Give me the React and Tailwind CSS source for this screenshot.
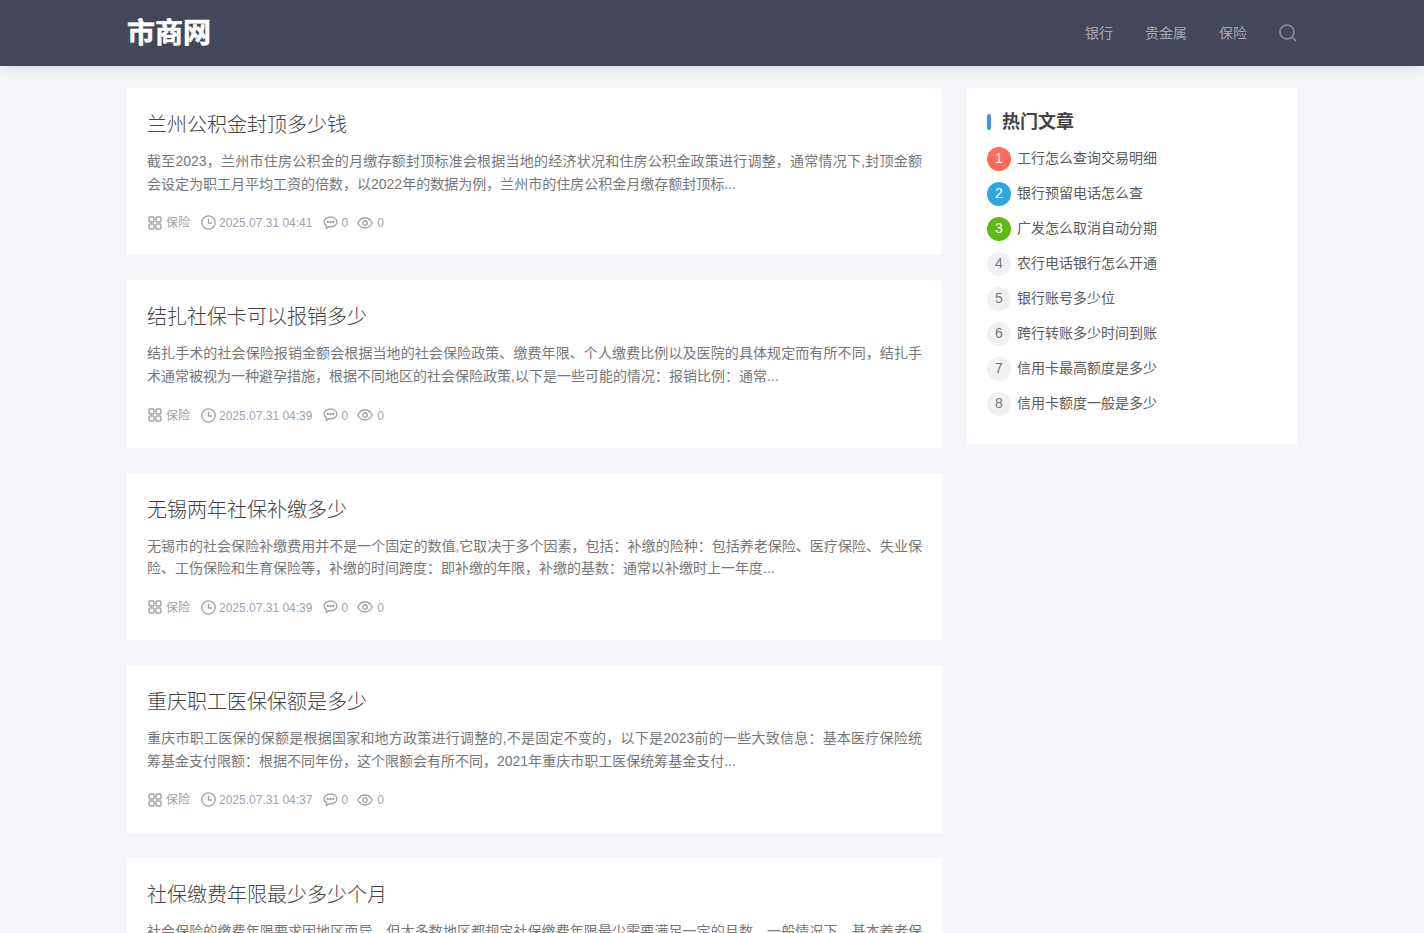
import React from "react";

const FONT = "font-['Liberation_Sans','Noto_Sans_CJK_SC',sans-serif]";

const posts = [
  { title: "兰州公积金封顶多少钱", time: "2025.07.31 04:41", text: "截至2023，兰州市住房公积金的月缴存额封顶标准会根据当地的经济状况和住房公积金政策进行调整，通常情况下,封顶金额会设定为职工月平均工资的倍数，以2022年的数据为例，兰州市的住房公积金月缴存额封顶标..." },
  { title: "结扎社保卡可以报销多少", time: "2025.07.31 04:39", text: "结扎手术的社会保险报销金额会根据当地的社会保险政策、缴费年限、个人缴费比例以及医院的具体规定而有所不同，结扎手术通常被视为一种避孕措施，根据不同地区的社会保险政策,以下是一些可能的情况：报销比例：通常..." },
  { title: "无锡两年社保补缴多少", time: "2025.07.31 04:39", text: "无锡市的社会保险补缴费用并不是一个固定的数值,它取决于多个因素，包括：补缴的险种：包括养老保险、医疗保险、失业保险、工伤保险和生育保险等，补缴的时间跨度：即补缴的年限，补缴的基数：通常以补缴时上一年度..." },
  { title: "重庆职工医保保额是多少", time: "2025.07.31 04:37", text: "重庆市职工医保的保额是根据国家和地方政策进行调整的,不是固定不变的，以下是2023前的一些大致信息：基本医疗保险统筹基金支付限额：根据不同年份，这个限额会有所不同，2021年重庆市职工医保统筹基金支付..." },
  { title: "社保缴费年限最少多少个月", time: "2025.07.31 04:35", text: "社会保险的缴费年限要求因地区而异，但大多数地区都规定社保缴费年限最少需要满足一定的月数，一般情况下，基本养老保险的累计缴费年限需要满足十五年，也就是一百八十个月..." },
];

const hot = [
  ["工行怎么查询交易明细", "bg-[#ff6b5a] text-white"],
  ["银行预留电话怎么查", "bg-[#2ea7e0] text-white"],
  ["广发怎么取消自动分期", "bg-[#5fba13] text-white"],
  ["农行电话银行怎么开通", "bg-[#f0f1f2] text-[#777]"],
  ["银行账号多少位", "bg-[#f0f1f2] text-[#777]"],
  ["跨行转账多少时间到账", "bg-[#f0f1f2] text-[#777]"],
  ["信用卡最高额度是多少", "bg-[#f0f1f2] text-[#777]"],
  ["信用卡额度一般是多少", "bg-[#f0f1f2] text-[#777]"],
];

function GridIcon() {
  return (
    <svg width="14" height="14" viewBox="0 0 14 14" fill="none" stroke="#a0a2ad" strokeWidth="1.4" className="shrink-0">
      <rect x="1" y="1" width="5" height="5" rx="1" />
      <rect x="8" y="1" width="5" height="5" rx="1" />
      <rect x="1" y="8" width="5" height="5" rx="1" />
      <rect x="8" y="8" width="5" height="5" rx="1" />
    </svg>
  );
}
function ClockIcon() {
  return (
    <svg width="15" height="15" viewBox="0 0 15 15" fill="none" stroke="#a0a2ad" strokeWidth="1.3" className="shrink-0">
      <circle cx="7.5" cy="7.5" r="6.7" />
      <path d="M7.5 3.6V8h3.4" />
    </svg>
  );
}
function ChatIcon() {
  return (
    <svg width="15" height="14" viewBox="0 0 15 14" fill="none" stroke="#a0a2ad" strokeWidth="1.3" className="shrink-0">
      <path d="M7.500 1C3.900 1 1 3.100 1 5.900c0 1.700 1.100 3.100 2.700 4L3.400 12.600l3-1.900c.4 0 .7.100 1.100.100 3.600 0 6.500-2.200 6.500-4.900S11.100 1 7.500 1z" />
      <circle cx="4.700" cy="6" r=".6" fill="#a0a2ad" />
      <circle cx="7.500" cy="6" r=".6" fill="#a0a2ad" />
      <circle cx="10.300" cy="6" r=".6" fill="#a0a2ad" />
    </svg>
  );
}
function EyeIcon() {
  return (
    <svg width="16" height="12" viewBox="0 0 16 12" fill="none" stroke="#a0a2ad" strokeWidth="1.3" className="shrink-0">
      <path d="M.8 6C2.400 2.800 5 1 8 1s5.600 1.800 7.200 5C13.600 9.200 11 11 8 11S2.400 9.200.8 6z" />
      <circle cx="8" cy="6" r="2.300" />
    </svg>
  );
}

function Post({ p }) {
  return (
    <article className="bg-white px-5 pt-[22px] h-[167.4px] mb-[25px] shrink-0">
      <h2 className="text-[20px] leading-[30px] font-light text-[#444]">{p.title}</h2>
      <p className="mt-[10px] text-[14px] leading-[22.6px] text-[#777] text-justify">{p.text}</p>
      <div className="mt-[19px] pl-px flex items-center text-[12px] leading-[16px] text-[#a0a2ad]">
        <GridIcon />
        <span className="ml-[4px] pt-px">保险</span>
        <span className="ml-[11px]"><ClockIcon /></span>
        <span className="ml-[3px] pt-px">{p.time}</span>
        <span className="ml-[11px]"><ChatIcon /></span>
        <span className="ml-[3px] pt-px">0</span>
        <span className="ml-[9px]"><EyeIcon /></span>
        <span className="ml-[4px] pt-px">0</span>
      </div>
    </article>
  );
}

export default function App() {
  return (
    <div className={`${FONT} h-[933px] overflow-hidden bg-[#f5f6f9]`}>
      <header className="relative z-10 h-[66px] bg-[#44465a] shadow-[0_2px_12px_rgba(0,0,0,0.12)]">
        <div className="mx-auto w-[1170px] h-full flex items-center justify-between">
          <div className="text-[28px] font-bold text-white leading-none pt-[2px] [-webkit-text-stroke:0.6px_white]">市商网</div>
          <nav className="flex items-center text-[14px] text-[#a5a6b0]">
            <a className="mr-8">银行</a>
            <a className="mr-8">贵金属</a>
            <a className="mr-8">保险</a>
            <svg width="18" height="18" viewBox="0 0 18 18" fill="none" stroke="#8d8e9c" strokeWidth="1.6">
              <circle cx="8" cy="8" r="7" />
              <path d="M13 13l4 4" />
            </svg>
          </nav>
        </div>
      </header>
      <main className="mx-auto w-[1170px] pt-[22px] flex items-start gap-[25px]">
        <div className="w-[815px] flex flex-col">
          {posts.map((p) => (
            <Post key={p.title} p={p} />
          ))}
        </div>
        <aside className="w-[330px] h-[356px] bg-white px-5 pt-[21px]">
          <div className="flex items-center h-[26px]">
            <span className="w-1 h-4 rounded-sm bg-[#4a90e2]" />
            <h3 className="ml-[11px] text-[18px] font-bold text-[#444] leading-none">热门文章</h3>
          </div>
          <ul className="mt-[6px]">
            {hot.map(([t, c], i) => (
              <li key={t} className="flex items-center h-[35px]">
                <span className={`w-6 h-6 rounded-full flex items-center justify-center text-[14px] ${c}`}>{i + 1}</span>
                <span className="ml-[6px] text-[14px] text-[#5c5c5c]">{t}</span>
              </li>
            ))}
          </ul>
        </aside>
      </main>
    </div>
  );
}
